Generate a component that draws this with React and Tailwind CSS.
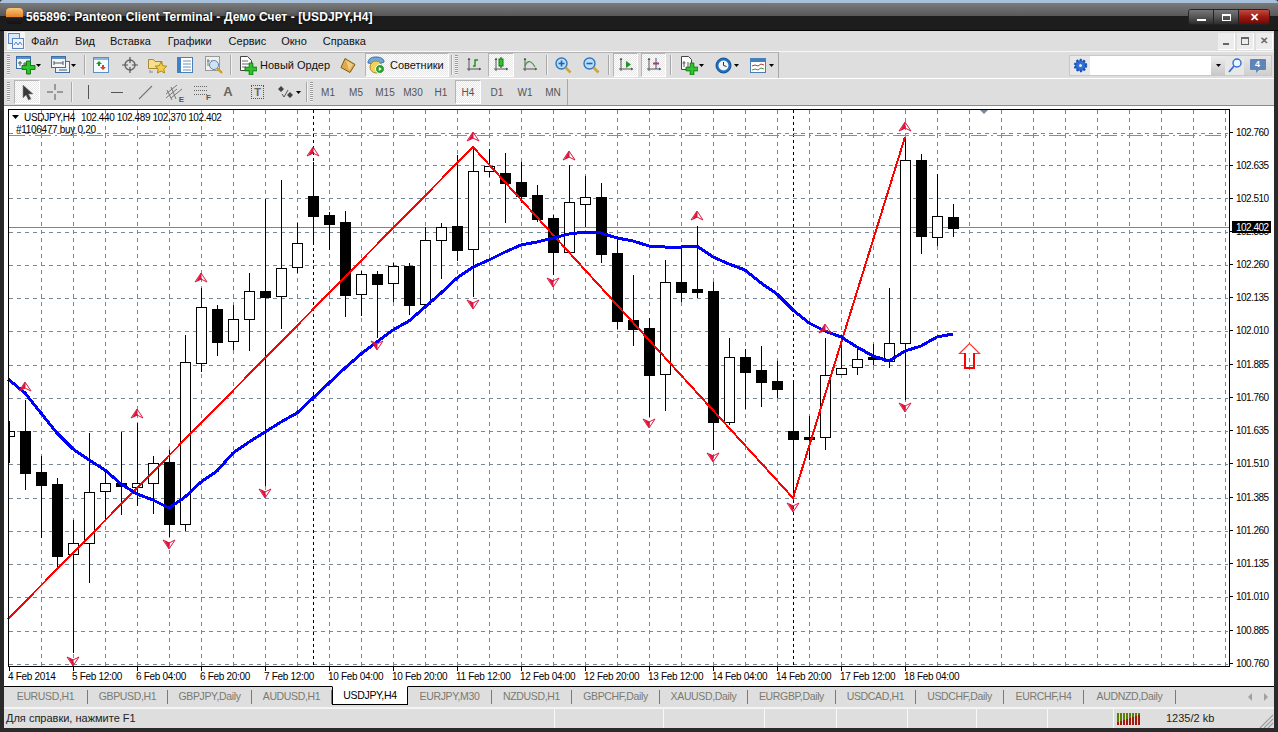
import React from "react";

// [x, open-top y, body-bottom y, wick top, wick bottom, black?]
const CANDLES = [
  [9, 431, 436, 421, 463, 0], [25, 431, 473, 400, 490, 1], [41, 472, 485, 456, 538, 1], [57, 484, 556, 478, 567, 1],
  [73, 543, 554, 520, 653, 0], [89, 492, 543, 433, 583, 0], [105, 483, 491, 470, 519, 0], [121, 483, 486, 432, 515, 1],
  [137, 483, 487, 423, 506, 0], [153, 463, 483, 456, 514, 0], [169, 462, 524, 450, 537, 1], [185, 362, 524, 335, 531, 0],
  [201, 307, 363, 288, 372, 0], [217, 309, 342, 305, 356, 1], [233, 319, 341, 305, 350, 0], [249, 291, 319, 273, 351, 0],
  [265, 291, 297, 199, 486, 1], [281, 268, 296, 180, 329, 0], [297, 243, 267, 223, 273, 0], [313, 196, 216, 162, 243, 1],
  [329, 215, 224, 212, 250, 1], [345, 222, 295, 211, 317, 1], [361, 274, 294, 271, 316, 0], [377, 274, 284, 271, 338, 1],
  [393, 266, 283, 263, 302, 0], [409, 266, 305, 263, 315, 1], [425, 240, 304, 227, 305, 0], [441, 227, 240, 223, 279, 0],
  [457, 226, 250, 155, 261, 1], [473, 171, 249, 147, 297, 0], [489, 166, 171, 149, 177, 0], [505, 173, 183, 153, 223, 1],
  [521, 182, 196, 162, 203, 1], [537, 195, 219, 185, 222, 1], [553, 218, 252, 215, 275, 1], [569, 202, 252, 165, 252, 0],
  [585, 197, 204, 176, 227, 0], [601, 197, 254, 183, 263, 1], [617, 253, 321, 236, 329, 1], [633, 320, 329, 275, 346, 1],
  [649, 328, 375, 318, 417, 1], [665, 282, 374, 260, 411, 0], [681, 282, 292, 247, 302, 1], [697, 289, 292, 226, 298, 1],
  [713, 291, 422, 282, 450, 1], [729, 357, 422, 338, 425, 0], [745, 357, 372, 349, 409, 1], [761, 370, 382, 346, 407, 1],
  [777, 381, 389, 361, 398, 1], [793, 431, 439, 383, 497, 1], [809, 437, 439, 416, 460, 1], [825, 375, 437, 338, 450, 0],
  [841, 368, 374, 335, 375, 0], [857, 359, 367, 348, 375, 0], [873, 357, 359, 344, 365, 1], [889, 343, 361, 288, 368, 0],
  [905, 160, 343, 138, 400, 0], [921, 160, 236, 154, 254, 1], [937, 216, 237, 174, 246, 0], [953, 217, 228, 204, 237, 1],
];

const MA = "8,379 25,393 41,413 57,433 73,449 89,460 105,470 121,484 137,494 153,500 169,508 185,497 201,482 217,471 233,453 249,442 265,432 281,422 297,413 313,398 329,383 345,368 361,354 377,342 393,330 409,321 425,307 441,293 457,278 473,267 489,260 505,252 521,245 537,242 553,238 569,234 585,232 601,233 617,238 633,241 649,246 665,247 681,247 697,246 713,257 729,264 745,270 761,283 777,294 793,310 809,323 825,331 841,337 857,347 873,356 889,361 905,351 921,346 937,337 953,334";

const GRID_Y = [133, 165, 198, 232, 265, 298, 331, 365, 398, 431, 464, 498, 531, 564, 597, 631, 664];
const GRID_X = Array.from({ length: 38 }, (_, i) => 41 + i * 32).filter((x) => x < 1228);
const PRICES = [
  [132, "102.760"], [165, "102.635"], [198, "102.510"], [231, "102.385"], [264, "102.260"], [297, "102.135"],
  [330, "102.010"], [364, "101.885"], [397, "101.760"], [430, "101.635"], [463, "101.510"], [497, "101.385"],
  [530, "101.260"], [563, "101.135"], [596, "101.010"], [630, "100.885"], [663, "100.760"],
];
const TIMES = [
  [8, "4 Feb 2014"], [72, "5 Feb 12:00"], [136, "6 Feb 04:00"], [200, "6 Feb 20:00"], [264, "7 Feb 12:00"],
  [328, "10 Feb 04:00"], [392, "10 Feb 20:00"], [456, "11 Feb 12:00"], [520, "12 Feb 04:00"], [584, "12 Feb 20:00"],
  [648, "13 Feb 12:00"], [712, "14 Feb 04:00"], [776, "14 Feb 20:00"], [840, "17 Feb 12:00"], [904, "18 Feb 04:00"],
];
const UPS = [[25, 387], [137, 414], [201, 278], [313, 152], [473, 137], [569, 156], [697, 216], [825, 329], [905, 127]];
const DOWNS = [[73, 661], [169, 544], [265, 493], [377, 345], [473, 304], [553, 282], [649, 423], [713, 457], [793, 507], [905, 407]];

const Marker = ({ x, y, down }) => (
  <g transform={`translate(${x} ${y}) scale(1 ${down ? -1 : 1})`} stroke="#dc143c" fill="none" strokeWidth="1">
    <path d="M0 -5 L-6 4 L0 1 L6 4 Z" />
    <path d="M0 -4 L-4 3 L0 1 Z" fill="#dc143c" />
  </g>
);

function Chart() {
  return (
    <svg viewBox="4 107 1270 579" className="block w-[1270px] h-[579px] bg-white font-['Liberation_Sans',sans-serif]">
      <g stroke="#778899" strokeDasharray="4 4" shapeRendering="crispEdges">
        {GRID_Y.map((y) => <line key={y} x1="9" x2="1228" y1={y + 0.5} y2={y + 0.5} />)}
        {GRID_X.map((x) => <line key={x} x1={x + 0.5} x2={x + 0.5} y1="110" y2="666" />)}
      </g>
      <g stroke="#000" strokeDasharray="3 3" shapeRendering="crispEdges">
        <line x1="313.5" x2="313.5" y1="110" y2="666" />
        <line x1="793.5" x2="793.5" y1="110" y2="666" />
      </g>
      <line x1="9" x2="1229" y1="135.5" y2="135.5" stroke="#32cd32" strokeDasharray="16 4 2 4" shapeRendering="crispEdges" />
      <line x1="9" x2="1229" y1="227.5" y2="227.5" stroke="#778899" shapeRendering="crispEdges" />
      <g shapeRendering="crispEdges">
        {CANDLES.map(([x, top, bottom, wickTop, wickBottom, black]) => (
          <g key={x}>
            <line x1={x + 0.5} x2={x + 0.5} y1={wickTop} y2={wickBottom} stroke="#000" />
            {x > 9 ? (
              <rect x={x - 4.5} y={top + 0.5} width="10" height={bottom - top} fill={black ? "#000" : "#fff"} stroke="#000" />
            ) : (
              <rect x="9" y={top + 0.5} width="5.5" height={bottom - top} fill="#fff" stroke="#000" />
            )}
          </g>
        ))}
      </g>
      <polyline points="8,619 473,147 793,498 905,137" fill="none" stroke="#f00" strokeWidth="2" shapeRendering="crispEdges" />
      <polyline points={MA} fill="none" stroke="#00f" strokeWidth="3" shapeRendering="crispEdges" />
      {UPS.map(([x, y]) => <Marker key={`${x}u`} x={x} y={y} />)}
      {DOWNS.map(([x, y]) => <Marker key={`${x}d`} x={x} y={y} down />)}
      <path d="M964.500 353.500 L959.500 353.500 L969.500 343.500 L979.500 353.500 L974.500 353.500" fill="#fff" stroke="#f33" strokeWidth="1.200" />
      <path d="M965 353 L965 368 L974 368 L974 353" fill="none" stroke="#f00" strokeWidth="2" shapeRendering="crispEdges" />
      <path d="M979 109 L989 109 L984 114 Z" fill="#778899" />
      <rect x="8.5" y="109.5" width="1221" height="557" fill="none" stroke="#000" shapeRendering="crispEdges" />
      <g stroke="#000" shapeRendering="crispEdges">
        {PRICES.map(([y]) => <line key={y} x1="1230" x2="1233" y1={y + 0.5} y2={y + 0.5} />)}
        {TIMES.map(([x]) => <line key={x} x1={x + 1.5} x2={x + 1.5} y1="667" y2="671" />)}
      </g>
      <g fontSize="10" fill="#000">
        {PRICES.map(([y, label]) => <text key={y} x="1236" y={y + 4} letterSpacing="-0.5">{label}</text>)}
        {TIMES.map(([x, label]) => <text key={x} x={x} y="680" letterSpacing="-0.3">{label}</text>)}
        <path d="M12 115 L19 115 L15.5 119 Z" />
        <text x="24" y="121" letterSpacing="-0.3">USDJPY,H4</text>
        <text x="81" y="121" letterSpacing="-0.4">102.440 102.489 102.370 102.402</text>
        <text x="16" y="133" letterSpacing="-0.3">#1106477 buy 0.20</text>
      </g>
      <rect x="1232" y="221" width="39" height="12" fill="#000" />
      <text x="1236" y="231" fontSize="10" letterSpacing="-0.5" fill="#fff">102.402</text>
    </svg>
  );
}

/* --- toolbar icons --- */
const Caret = ({ className = "" }) => (
  <svg width="5" height="3" viewBox="0 0 5 3" className={`shrink-0 ${className}`}><path d="M0 0h5L2.5 3z" fill="#000" /></svg>
);

const Grip = ({ className = "" }) => (
  <div className={`w-[3px] h-[20px] shrink-0 bg-[repeating-linear-gradient(#9a9a9a_0_1px,#f4f4f4_1px_2px)] ${className}`} />
);

const Sep = ({ className = "" }) => <div className={`w-[2px] h-[20px] shrink-0 border-l border-l-[#a8a8a8] border-r border-r-[#f2f2f2] ${className}`} />;

const Pressed = ({ className = "", children }) => (
  <div className={`h-[24px] shrink-0 flex items-center justify-center border border-t-[#b4b4b4] border-l-[#b4b4b4] border-r-white border-b-white bg-[repeating-conic-gradient(#ffffff_0_25%,#e6e6e6_0_50%)] bg-[length:2px_2px] ${className}`}>
    {children}
  </div>
);

const Plus = ({ x = 8, y = 8, s = 10 }) => (
  <path
    d={`M${x + s * 0.35} ${y}h${s * 0.3}v${s * 0.35}h${s * 0.35}v${s * 0.3}h${-s * 0.35}v${s * 0.35}h${-s * 0.3}v${-s * 0.35}h${-s * 0.35}v${-s * 0.3}h${s * 0.35}z`}
    fill="#2fc42f" stroke="#0f7a0f" strokeWidth="1"
  />
);

const I = ({ w = 18, h = 18, className = "", children }) => (
  <svg width={w} height={h} viewBox={`0 0 ${w} ${h}`} className={`shrink-0 ${className}`}>{children}</svg>
);

const NewChart = () => (
  <I w={20} h={20}>
    <rect x="0.5" y="1.5" width="14" height="12" fill="#eef4fb" stroke="#3a6ea5" />
    <path d="M1 2h13v2H1z" fill="#5b8fc7" />
    <path d="M4 6v5M2 8h4M9 7v4M7 9h4" stroke="#555" fill="none" />
    <Plus x={6} y={6} s={13} />
  </I>
);
const Profiles = () => (
  <I w={20} h={20}>
    <rect x="4.5" y="6.5" width="14" height="11" fill="#eef4fb" stroke="#3a6ea5" />
    <rect x="0.5" y="1.5" width="14" height="11" fill="#f4f8fc" stroke="#3a6ea5" />
    <path d="M1 2h13v2H1z" fill="#5b8fc7" />
    <path d="M3 8h9M3 6v4M12 6v4M8 15h8" stroke="#555" fill="none" />
  </I>
);
const MarketWatch = () => (
  <I w={17} h={17}>
    <rect x="0.5" y="0.5" width="15" height="15" fill="#f6f9fd" stroke="#5d8ec4" />
    <path d="M1 1h14v2H1z" fill="#8fb6e0" />
    <path d="M6 4l3 3H7v2H5V7H3z" fill="#1e9b1e" />
    <path d="M10 13l3-3h-2V8H9v2H7z" fill="#d2452a" />
  </I>
);
const Crosshair = () => (
  <I w={16} h={16}>
    <circle cx="8" cy="8" r="5" fill="none" stroke="#666" strokeWidth="1.4" />
    <path d="M8 0v6M8 10v6M0 8h6M10 8h6" stroke="#555" strokeWidth="1.2" />
  </I>
);
const Navigator = () => (
  <I w={20} h={18}>
    <path d="M0.5 3.5h5l1.5 2h7v7h-13.500z" fill="#f7df8f" stroke="#a98a34" />
    <path d="M13 6l1.800 3.700 4 .5-3 2.800.8 4-3.600-2-3.600 2 .8-4-3-2.800 4-.5z" fill="#f2cf4a" stroke="#b08a1a" />
    <path d="M2 14v3M4 15v2" stroke="#888" />
  </I>
);
const TerminalIcon = () => (
  <I w={16} h={17}>
    <rect x="0.500" y="0.500" width="15" height="15" fill="#fff" stroke="#4a7fb8" />
    <path d="M1 1h3v14H1z" fill="#3f80c9" />
    <path d="M6 4h8M6 7h8M6 10h8M6 13h8" stroke="#6f93bb" />
  </I>
);
const Tester = () => (
  <I w={19} h={19}>
    <rect x="0.500" y="0.500" width="14" height="14" fill="#f0f0f0" stroke="#999" />
    <path d="M3 3v7M2 5h3M7 4v6M6 7h3" stroke="#777" />
    <circle cx="9" cy="9" r="4.500" fill="#cfe3f7" stroke="#5b87b5" />
    <path d="M12 12l5 5" stroke="#c9a02c" strokeWidth="2.400" />
  </I>
);
const OrderIcon = () => (
  <I w={17} h={19}>
    <path d="M0.500 0.500h7l4 4v10h-11z" fill="#fff" stroke="#444" />
    <path d="M2 5h6M2 8h7M2 11h4" stroke="#666" />
    <Plus x={5} y={7} s={12} />
  </I>
);
const GoldPen = () => (
  <I w={17} h={17}>
    <path d="M5 1.500l10 6-5 8-9-5z" fill="#e0ab4c" stroke="#7d5a17" />
    <path d="M6 3l7 4.500-4 6" fill="#f0cd83" />
  </I>
);
const Experts = () => (
  <I w={19} h={18}>
    <path d="M1 7c0-4 3-6 8-6s8 2 8 5l-4 1.500H5z" fill="#6fa8d8" stroke="#3b6d9c" />
    <circle cx="9" cy="11" r="6" fill="#f4d25a" stroke="#a78b25" />
    <circle cx="13" cy="13" r="4.500" fill="#2da02d" stroke="#fff" />
    <path d="M11.800 11v4l3-2z" fill="#fff" />
  </I>
);
const Axis = ({ children }) => (
  <I w={16} h={16}>
    <path d="M3 1v13M1 12h14" stroke="#555" fill="none" />
    <path d="M1.500 3L3 1l1.500 2zM13 10.500l2 1.500-2 1.500z" fill="#555" />
    {children}
  </I>
);
const ZoomIcon = ({ minus }) => (
  <I w={17} h={17}>
    <circle cx="6.500" cy="6.500" r="5.500" fill="#bcdcf6" stroke="#2f78c0" strokeWidth="1.400" />
    <path d="M3.500 6.500h6" stroke="#1f63ab" strokeWidth="1.600" />
    {!minus && <path d="M6.500 3.500v6" stroke="#1f63ab" strokeWidth="1.600" />}
    <path d="M10.500 10.500l5 5" stroke="#cfa733" strokeWidth="2.600" />
  </I>
);
const Templates = () => (
  <I w={18} h={19}>
    <path d="M1.500 0.500h7l3 3v10h-10z" fill="#fff" stroke="#444" />
    <path d="M4 5v6M2.500 7h3M8 6v6" stroke="#555" />
    <Plus x={6} y={7} s={12} />
  </I>
);
const Clock = () => (
  <I w={17} h={17}>
    <circle cx="8.500" cy="8.500" r="7.500" fill="#1d6fc2" stroke="#0f4d8e" />
    <circle cx="8.500" cy="8.500" r="5" fill="#f2f6fa" />
    <path d="M8.500 5v3.500l3 1" stroke="#333" fill="none" />
  </I>
);
const Periodicity = () => (
  <I w={16} h={15}>
    <rect x="0.500" y="0.500" width="15" height="14" fill="#fff" stroke="#4a7fb8" />
    <path d="M1 1h14v3H1z" fill="#3f7fc4" />
    <path d="M2 8l3-1 3 1 3-2 3 1" stroke="#b2402b" fill="none" />
    <path d="M2 12l3-1 3 1 3-2 3 1" stroke="#3f9b3f" fill="none" />
  </I>
);
const Gear = () => (
  <I w={15} h={15}>
    <circle cx="7.500" cy="7.500" r="5.500" fill="#2f6fd8" stroke="#1e4fa8" strokeDasharray="2 1.500" strokeWidth="2.400" />
    <circle cx="7.500" cy="7.500" r="1.500" fill="#dfe9fa" />
  </I>
);

const Tick = ({ children, className = "" }) => (
  <span className={`w-[28px] shrink-0 text-center text-[10px] text-[#555] ${className}`}>{children}</span>
);

function Toolbars() {
  return (
    <div className="h-[54px] shrink-0 flex flex-col bg-[#dedede]">
      <div className="h-[27px] shrink-0 flex items-center border-t border-t-[#f8f8f8]">
        <div className="w-[775px] h-[27px] shrink-0 flex items-center border-t border-t-[#b4b4b4] border-b border-b-[#a8a8a8] border-r border-r-[#a8a8a8]">
          <Grip className="ml-[3px]" />
          <div className="ml-[6px] shrink-0 flex"><NewChart /></div>
          <Caret />
          <div className="ml-[10px] shrink-0 flex"><Profiles /></div>
          <Caret />
          <Sep className="ml-[8px]" />
          <div className="ml-[7px] shrink-0 flex"><MarketWatch /></div>
          <div className="ml-[12px] shrink-0 flex"><Crosshair /></div>
          <div className="ml-[10px] shrink-0 flex"><Navigator /></div>
          <div className="ml-[9px] shrink-0 flex"><TerminalIcon /></div>
          <div className="ml-[12px] shrink-0 flex"><Tester /></div>
          <Sep className="ml-[6px]" />
          <div className="ml-[8px] shrink-0 flex"><OrderIcon /></div>
          <span className="ml-[3px] w-[72px] shrink-0 text-[11px] text-[#111]">Новый Ордер</span>
          <div className="ml-[8px] shrink-0 flex"><GoldPen /></div>
          <Pressed className="ml-[8px] w-[84px] justify-start pl-[1px]">
            <Experts />
            <span className="ml-[4px] text-[11px] text-[#111]">Советники</span>
          </Pressed>
          <Sep className="ml-[2px]" />
          <Grip className="ml-[2px]" />
          <div className="ml-[8px] shrink-0 flex">
            <Axis><path d="M7 9h2V3h3" stroke="#1a8f1a" strokeWidth="1.400" fill="none" /></Axis>
          </div>
          <Pressed className="ml-[6px] w-[26px]">
            <Axis><path d="M8 0v11" stroke="#222" /><rect x="6" y="2" width="4" height="7" fill="#2fc42f" stroke="#0f7a0f" /></Axis>
          </Pressed>
          <div className="ml-[8px] shrink-0 flex">
            <Axis><path d="M3 9c2-5 5-6 8-2l2 3" stroke="#3f9b3f" strokeWidth="1.200" fill="none" /></Axis>
          </div>
          <Sep className="ml-[8px]" />
          <div className="ml-[7px] shrink-0 flex"><ZoomIcon /></div>
          <div className="ml-[11px] shrink-0 flex"><ZoomIcon minus /></div>
          <Sep className="ml-[8px]" />
          <Pressed className="ml-[3px] w-[25px]">
            <Axis><path d="M8 4l5 3.500-5 3.500z" fill="#1a9a1a" /></Axis>
          </Pressed>
          <Pressed className="ml-[3px] w-[25px]">
            <Axis><path d="M10 1v11" stroke="#2557a8" /><path d="M7 6.500h6" stroke="#c0392b" strokeWidth="2" /></Axis>
          </Pressed>
          <Sep className="ml-[4px]" />
          <div className="ml-[8px] shrink-0 flex"><Templates /></div>
          <Caret className="ml-[1px]" />
          <div className="ml-[11px] shrink-0 flex"><Clock /></div>
          <Caret className="ml-[2px]" />
          <div className="ml-[11px] shrink-0 flex"><Periodicity /></div>
          <Caret className="ml-[3px]" />
        </div>
        <div className="ml-auto mr-[2px] h-[21px] flex bg-[#e8e8e8] border border-[#c8c8c8]">
          <div className="w-[20px] flex items-center justify-center"><Gear /></div>
          <div className="w-[121px] bg-white" />
          <div className="w-[14px] flex items-center justify-center bg-gradient-to-b from-[#ededed] to-[#c8c8c8]"><Caret /></div>
          <div className="w-[19px] flex items-center justify-center">
            <I w={14} h={15}>
              <circle cx="9" cy="5" r="4" fill="#eef5fd" stroke="#2f6fd8" strokeWidth="1.400" />
              <path d="M6 8l-5 6" stroke="#2f6fd8" strokeWidth="1.800" />
            </I>
          </div>
          <div className="w-[27px] flex items-center justify-center bg-gradient-to-b from-[#e8e8e8] to-[#cfcfcf]">
            <div className="relative w-[16px] h-[11px] -mt-[2px] bg-[#6083b8] rounded-[1px] text-center text-[9px] leading-[11px] font-bold text-white">
              4
              <span className="absolute left-[6px] top-[11px] border-t-[3px] border-t-[#6083b8] border-r-[3px] border-r-transparent" />
            </div>
          </div>
        </div>
      </div>
      <div className="flex-1 min-h-0 flex items-center border-t border-t-white">
        <div className="w-[564px] h-full shrink-0 flex items-center border-r border-r-[#a8a8a8]">
          <Grip className="ml-[3px]" />
          <Pressed className="ml-[4px] w-[26px]">
            <I w={13} h={17}><path d="M2 1v13l3-3 2.500 5 2.500-1-2.500-5h4.500z" fill="#3a3a3a" stroke="#888" strokeWidth="0.600" /></I>
          </Pressed>
          <div className="ml-[7px] shrink-0 flex">
            <I w={16} h={16}><path d="M8 0v6M8 10v6M0 8h6M10 8h6" stroke="#555" /></I>
          </div>
          <Sep className="ml-[8px]" />
          <div className="ml-[15px] shrink-0 w-[1px] h-[14px] bg-[#555]" />
          <div className="ml-[22px] shrink-0 w-[12px] h-[1px] bg-[#555]" />
          <div className="ml-[15px] shrink-0 flex">
            <I w={15} h={15}><path d="M1 14L14 1" stroke="#777" strokeWidth="1.100" /></I>
          </div>
          <div className="ml-[13px] shrink-0 flex relative">
            <I w={16} h={17}><path d="M0 10L11 1M0 14L11 5M5 14L16 5M5 3l5 12M1 6l5 10" stroke="#777" /></I>
            <span className="absolute right-[-2px] bottom-[-3px] text-[8px] leading-[8px] font-bold text-[#555]">E</span>
          </div>
          <div className="ml-[12px] shrink-0 flex relative">
            <I w={14} h={14}><path d="M0 1.500h14M0 5.500h14M0 9.500h14" stroke="#666" strokeDasharray="1 1" /></I>
            <span className="absolute right-[-3px] bottom-[-3px] text-[8px] leading-[8px] font-bold text-[#555]">F</span>
          </div>
          <span className="ml-[15px] w-[10px] shrink-0 text-center text-[13px] font-bold text-[#666]">A</span>
          <div className="ml-[18px] w-[13px] h-[14px] shrink-0 flex items-center justify-center border border-dotted border-[#555] text-[11px] font-bold text-[#666]">T</div>
          <div className="ml-[14px] shrink-0 flex">
            <I w={18} h={16}><path d="M3 2l3 3-3 3-3-3zM12 8l3 3-3 3-3-3z" fill="#444" /><path d="M4 10l2 3 4-7" stroke="#555" fill="none" /></I>
          </div>
          <Caret />
          <Sep className="ml-[5px]" />
          <Grip className="ml-[2px]" />
          <Tick className="ml-[1px]">M1</Tick>
          <Tick>M5</Tick>
          <Tick className="ml-[1px]">M15</Tick>
          <Tick>M30</Tick>
          <Tick>H1</Tick>
          <Pressed className="w-[26px]"><span className="text-[10px] text-[#555]">H4</span></Pressed>
          <Tick className="ml-[2px]">D1</Tick>
          <Tick>W1</Tick>
          <Tick>MN</Tick>
        </div>
      </div>
    </div>
  );
}

const TABS = [
  ["EURUSD,H1", 84], ["GBPUSD,H1", 80], ["GBPJPY,Daily", 84], ["AUDUSD,H1", 80], ["USDJPY,H4", 76, true],
  ["EURJPY,M30", 84], ["NZDUSD,H1", 80], ["GBPCHF,Daily", 88], ["XAUUSD,Daily", 88], ["EURGBP,Daily", 88],
  ["USDCAD,H1", 80], ["USDCHF,Daily", 88], ["EURCHF,H4", 80], ["AUDNZD,Daily", 92],
];

function Tabs() {
  return (
    <div className="h-[21px] shrink-0 flex bg-[#dedede] border-t border-t-black text-[10.5px] tracking-[-0.35px]">
      {TABS.map(([name, width, active]) =>
        active ? (
          <div key={name} style={{ width }} className="h-[19px] -mt-px shrink-0 flex items-center justify-center bg-white border border-black border-t-white text-black">{name}</div>
        ) : (
          <div key={name} style={{ width }} className="shrink-0 flex items-center justify-center text-[#7a7a70]">
            <span className="flex-1 text-center">{name}</span>
            <span className="w-[1px] h-[14px] bg-[#7a7a70]" />
          </div>
        )
      )}
      <div className="ml-auto mr-[6px] flex items-center gap-[12px]">
        <span className="border-y-[4px] border-y-transparent border-r-[4px] border-r-[#a0a0a0]" />
        <span className="border-y-[4px] border-y-transparent border-l-[4px] border-l-[#a0a0a0]" />
      </div>
    </div>
  );
}

const StatusCell = ({ className = "", children }) => (
  <div className={`h-full shrink-0 border-l border-l-[#f8f8f8] flex items-center ${className}`}>{children}</div>
);

function StatusBar() {
  return (
    <div className="h-[21px] shrink-0 flex bg-[#dedede] border-t-2 border-t-[#f4f4f4] text-[11px] text-[#222]">
      <div className="w-[550px] shrink-0 pl-[2px] flex items-center">Для справки, нажмите F1</div>
      <StatusCell className="w-[109px]" />
      <StatusCell className="w-[101px]" />
      <StatusCell className="w-[72px]" />
      <StatusCell className="w-[71px]" />
      <StatusCell className="w-[69px]" />
      <StatusCell className="w-[71px]" />
      <StatusCell className="w-[66px]" />
      <StatusCell className="w-[120px] pl-[3px]">
        <svg width="24" height="13" viewBox="0 0 24 13" className="shrink-0">
          {Array.from({ length: 8 }, (_, i) => (
            <g key={i}>
              <rect x={i * 3} y="1" width="2" height={9 - i} fill="#5b7f00" />
              <rect x={i * 3} y={10 - i} width="2" height={i + 3} fill="#a31a0c" />
            </g>
          ))}
        </svg>
        <span className="ml-[25px] whitespace-nowrap">1235/2 kb</span>
      </StatusCell>
      <div className="ml-auto self-end flex">
        <svg width="16" height="14" viewBox="0 0 16 14">
          <path d="M15 1L2 14M15 5L6 14M15 9l-5 5" stroke="#9a9a9a" strokeWidth="1.200" />
        </svg>
      </div>
    </div>
  );
}

const MENU = [
  ["Файл", "ml-[6px]"], ["Вид", "ml-[17px]"], ["Вставка", "ml-[15px]"], ["Графики", "ml-[17px]"],
  ["Сервис", "ml-[17px]"], ["Окно", "ml-[15px]"], ["Справка", "ml-[16px]"],
];

const MdiButton = ({ children }) => (
  <div className="w-[17px] h-[17px] flex items-center justify-center bg-[#ececec] border-r border-b border-r-white border-b-white">{children}</div>
);

export default function App() {
  return (
    <div className="w-[1278px] h-[732px] overflow-hidden flex flex-col bg-[#2a2a2a] font-['Liberation_Sans',sans-serif]">
      <div className="h-[3px] shrink-0 bg-[#a9c0db] rounded-t-[6px]" />
      <div className="h-[28px] shrink-0 flex bg-[linear-gradient(#7a7a7a,#585858_48%,#1d1d1d_50%,#1d1d1d)] border-b border-b-black">
        <div className="mt-[5px] ml-[6px] w-[17px] h-[16px] rounded-[4px] bg-[linear-gradient(#f6c778,#e8822a_55%,#222_60%,#111)]" />
        <span className="ml-[3px] mt-[6px] text-[12px] leading-[17px] font-bold tracking-[0.1px] text-white whitespace-nowrap [text-shadow:0_0_3px_#000]">
          565896: Panteon Client Terminal - Демо Счет - [USDJPY,H4]
        </span>
        <div className="ml-auto mr-[8px] mt-[6px] h-[16px] flex rounded-[3px] border border-[#222] overflow-hidden">
          <div className="w-[25px] flex items-center justify-center bg-[linear-gradient(#777,#555_50%,#2c2c2c)] border-r border-r-[#222]">
            <span className="mt-[6px] w-[9px] h-[2px] bg-white" />
          </div>
          <div className="w-[25px] flex items-center justify-center bg-[linear-gradient(#777,#555_50%,#2c2c2c)] border-r border-r-[#222]">
            <span className="w-[9px] h-[7px] border border-white border-t-2" />
          </div>
          <div className="w-[30px] flex items-center justify-center bg-[linear-gradient(#c04a40,#9c1a12_50%,#6a0a06)] text-[11px] font-bold leading-none text-white">✕</div>
        </div>
      </div>

      <div className="flex-1 min-h-0 mx-[4px] flex flex-col bg-[#dedede]">
        <div className="h-[20px] shrink-0 flex items-center text-[11px] text-[#111]">
          <div className="ml-[3px] w-[18px] h-[18px] flex bg-[#f6f6f6]">
            <svg width="18" height="18" viewBox="0 0 18 18">
              <rect x="1.500" y="1.500" width="11" height="10" fill="#dbe8f7" stroke="#5a86bf" />
              <rect x="5.500" y="6.500" width="11" height="10" fill="#eef4fb" stroke="#5a86bf" />
              <path d="M7 13l2-3 2 3 2-3 2 3" stroke="#5a86bf" fill="none" />
            </svg>
          </div>
          {MENU.map(([label, margin]) => <span key={label} className={margin}>{label}</span>)}
          <div className="ml-auto mr-[1px] flex gap-[2px]">
            <MdiButton><span className="mt-[6px] w-[6px] h-[2px] bg-[#666]" /></MdiButton>
            <MdiButton><span className="w-[8px] h-[8px] border border-[#666] border-t-2" /></MdiButton>
            <MdiButton><span className="text-[10px] font-bold leading-none text-[#666]">✕</span></MdiButton>
          </div>
        </div>
        <Toolbars />
        <div className="h-[2px] shrink-0 bg-[#8a8a8a] border-b border-b-white" />
        <Chart />
        <Tabs />
        <StatusBar />
      </div>
      <div className="h-[4px] shrink-0 bg-[#2a2a2a]" />
    </div>
  );
}
